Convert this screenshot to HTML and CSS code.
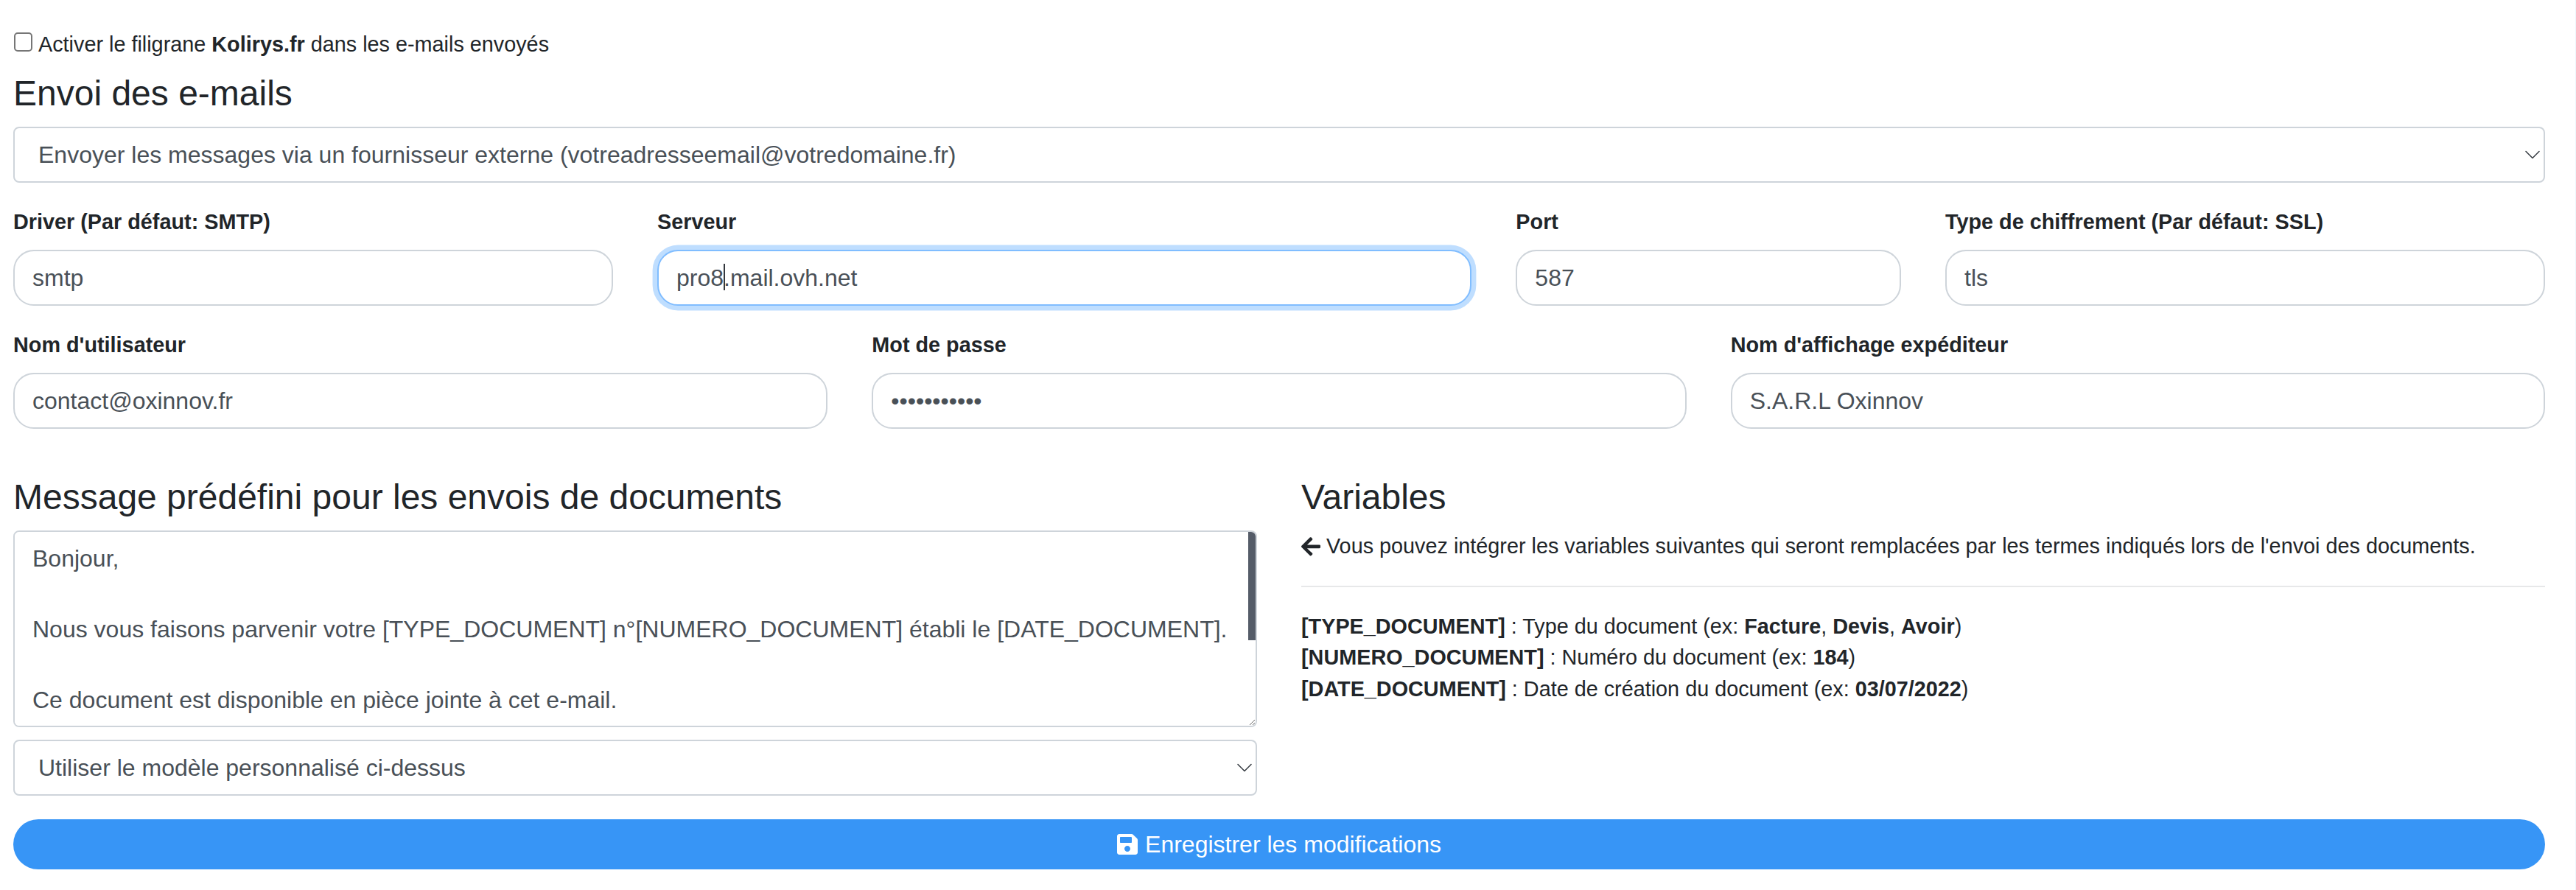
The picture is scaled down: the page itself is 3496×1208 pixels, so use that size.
FILE: index.html
```html
<!DOCTYPE html>
<html lang="fr">
<head>
<meta charset="utf-8">
<title>Envoi des e-mails</title>
<link rel="stylesheet" href="styles.css">
</head>
<body>
<form class="page">
  <label class="check-row"><input type="checkbox" class="check"><span>Activer le filigrane <b>Kolirys.fr</b> dans les e-mails envoyés</span></label>
  <h4 class="title">Envoi des e-mails</h4>
  <select class="control select block">
    <option>Envoyer les messages via un fournisseur externe (votreadresseemail@votredomaine.fr)</option>
  </select>
  <div class="grid">
    <div class="field span3"><label class="label">Driver (Par défaut: SMTP)</label><input class="control pill" value="smtp"></div>
    <div class="field span4"><label class="label">Serveur</label><div class="overlay-wrap"><input class="control pill focused" value="pro8.mail.ovh.net"><span class="caret"></span></div></div>
    <div class="field span2"><label class="label">Port</label><input class="control pill" value="587"></div>
    <div class="field span3"><label class="label">Type de chiffrement (Par défaut: SSL)</label><input class="control pill" value="tls"></div>
    <div class="field span4"><label class="label">Nom d'utilisateur</label><input class="control pill" value="contact@oxinnov.fr"></div>
    <div class="field span4"><label class="label">Mot de passe</label><input class="control pill" type="password" value="motdepasse1"></div>
    <div class="field span4"><label class="label">Nom d'affichage expéditeur</label><input class="control pill" value="S.A.R.L Oxinnov"></div>
  </div>
  <div class="columns">
    <div>
      <h4 class="title">Message prédéfini pour les envois de documents</h4>
      <div class="overlay-wrap">
        <textarea class="control area" rows="5">Bonjour,

Nous vous faisons parvenir votre [TYPE_DOCUMENT] n°[NUMERO_DOCUMENT] établi le [DATE_DOCUMENT].

Ce document est disponible en pièce jointe à cet e-mail.

Cordialement,
S.A.R.L Oxinnov</textarea>
        <span class="thumb"></span>
      </div>
      <select class="control select"><option>Utiliser le modèle personnalisé ci-dessus</option></select>
    </div>
    <div>
      <h4 class="title">Variables</h4>
      <p class="hint"><svg class="icon-arrow" viewBox="0 0 448 512"><path d="M257.5 445.1l-22.2 22.2c-9.4 9.4-24.6 9.4-33.9 0L7 273c-9.4-9.4-9.4-24.6 0-33.9L201.4 44.7c9.4-9.4 24.6-9.4 33.9 0l22.2 22.2c9.5 9.5 9.3 25-.4 34.3L136.6 216H424c13.3 0 24 10.7 24 24v32c0 13.3-10.7 24-24 24H136.6l120.5 114.8c9.8 9.3 10 24.8.4 34.3z"/></svg> Vous pouvez intégrer les variables suivantes qui seront remplacées par les termes indiqués lors de l'envoi des documents.</p>
      <hr class="rule">
      <p class="vars">
        <b>[TYPE_DOCUMENT]</b> : Type du document (ex: <b>Facture</b>, <b>Devis</b>, <b>Avoir</b>)<br>
        <b>[NUMERO_DOCUMENT]</b> : Numéro du document (ex: <b>184</b>)<br>
        <b>[DATE_DOCUMENT]</b> : Date de création du document (ex: <b>03/07/2022</b>)
      </p>
    </div>
  </div>
  <button type="button" class="save"><svg class="icon-save" viewBox="0 0 448 512"><path d="M433.941 129.941l-83.882-83.882A48 48 0 0 0 316.118 32H48C21.49 32 0 53.49 0 80v352c0 26.51 21.49 48 48 48h352c26.51 0 48-21.49 48-48V163.882a48 48 0 0 0-14.059-33.941zM224 416c-35.346 0-64-28.654-64-64 0-35.346 28.654-64 64-64s64 28.654 64 64c0 35.346-28.654 64-64 64zm96-304.52V212c0 6.627-5.373 12-12 12H76c-6.627 0-12-5.373-12-12V108c0-6.627 5.373-12 12-12h228.52c3.183 0 6.235 1.264 8.485 3.515l3.48 3.48A11.996 11.996 0 0 1 320 111.48z"/></svg>Enregistrer les modifications</button>
</form>
</body>
</html>
```
FILE: styles.css
```css
* { box-sizing: border-box; }
html, body { margin: 0; background: #fff; }
body {
  border-right: 1px solid #eef7fd;
  font-family: "Liberation Sans", Arial, sans-serif;
  font-size: 28.8px;
  line-height: 43.2px;
  color: #212529;
  overflow: hidden;
}
.page { padding: 39px 41px 28px 18px; }
.check-row { display: flex; align-items: center; gap: 8px; height: 43px; margin-bottom: 16px; }
.check {
  appearance: none;
  width: 25px; height: 26px;
  margin: 0 0 7px 1px;
  background: #fff;
  border: 2px solid #767676;
  border-radius: 5px;
}
.title { margin: 0 0 16px; font-size: 48px; font-weight: 400; line-height: 58px; }
.control {
  display: block;
  width: 100%;
  height: 76px;
  padding: 0 24px;
  font: 32px/48px "Liberation Sans", Arial, sans-serif;
  color: #495057;
  background: #fff;
  border: 2px solid #ced4da;
  border-radius: 8px;
  outline: none;
}
.select {
  appearance: none;
  padding: 0 32px;
  margin-top: 16.6px;
  background-image: url("data:image/svg+xml,%3csvg xmlns='http://www.w3.org/2000/svg' viewBox='0 0 16 16'%3e%3cpath fill='none' stroke='%23343a40' stroke-linecap='round' stroke-linejoin='round' stroke-width='1' d='M2 5l6 6 6-6'/%3e%3c/svg%3e");
  background-repeat: no-repeat;
  background-position: right 3px center;
  background-size: 24px 24px;
}
.select.block { margin: 0 0 32px; }
.grid { display: grid; grid-template-columns: repeat(12, 1fr); column-gap: 60px; row-gap: 32px; margin-bottom: 64px; }
.span2 { grid-column: span 2; }
.span3 { grid-column: span 3; }
.span4 { grid-column: span 4; }
.label { display: block; margin-bottom: 16px; font-weight: 700; }
.pill { border-radius: 28px; }
.overlay-wrap { position: relative; }
.focused { border-color: #80bdff; box-shadow: 0 0 0 6.4px rgba(0, 123, 255, .25); }
.caret { position: absolute; left: 90px; top: 19px; width: 2px; height: 36px; background: #33383e; }
.thumb { position: absolute; top: 2px; right: 2px; width: 10px; height: 147px; background: #555c68; border-radius: 0 6px 0 0; }
.columns { display: grid; grid-template-columns: 1fr 1fr; column-gap: 60px; margin-bottom: 32px; }
.area {
  height: 267px;
  padding: 12px 12px 12px 24px;
  resize: vertical;
  overflow-y: scroll;
}
.hint { margin: 0 0 31px; }
.icon-arrow { width: 26px; height: 29.7px; fill: #212529; vertical-align: -5px; }
.rule { margin: 0 0 32px; border: 0; border-top: 2px solid #e7e8e9; }
.vars { margin: 0; line-height: 42.6px; }
.save {
  display: flex;
  align-items: center;
  justify-content: center;
  gap: 10px;
  width: 100%;
  height: 68px;
  padding: 0;
  font: 32px/48px "Liberation Sans", Arial, sans-serif;
  color: #fff;
  background: #3795f6;
  border: 0;
  border-radius: 34px;
}
.icon-save { width: 28px; height: 32px; fill: #fff; }
```
